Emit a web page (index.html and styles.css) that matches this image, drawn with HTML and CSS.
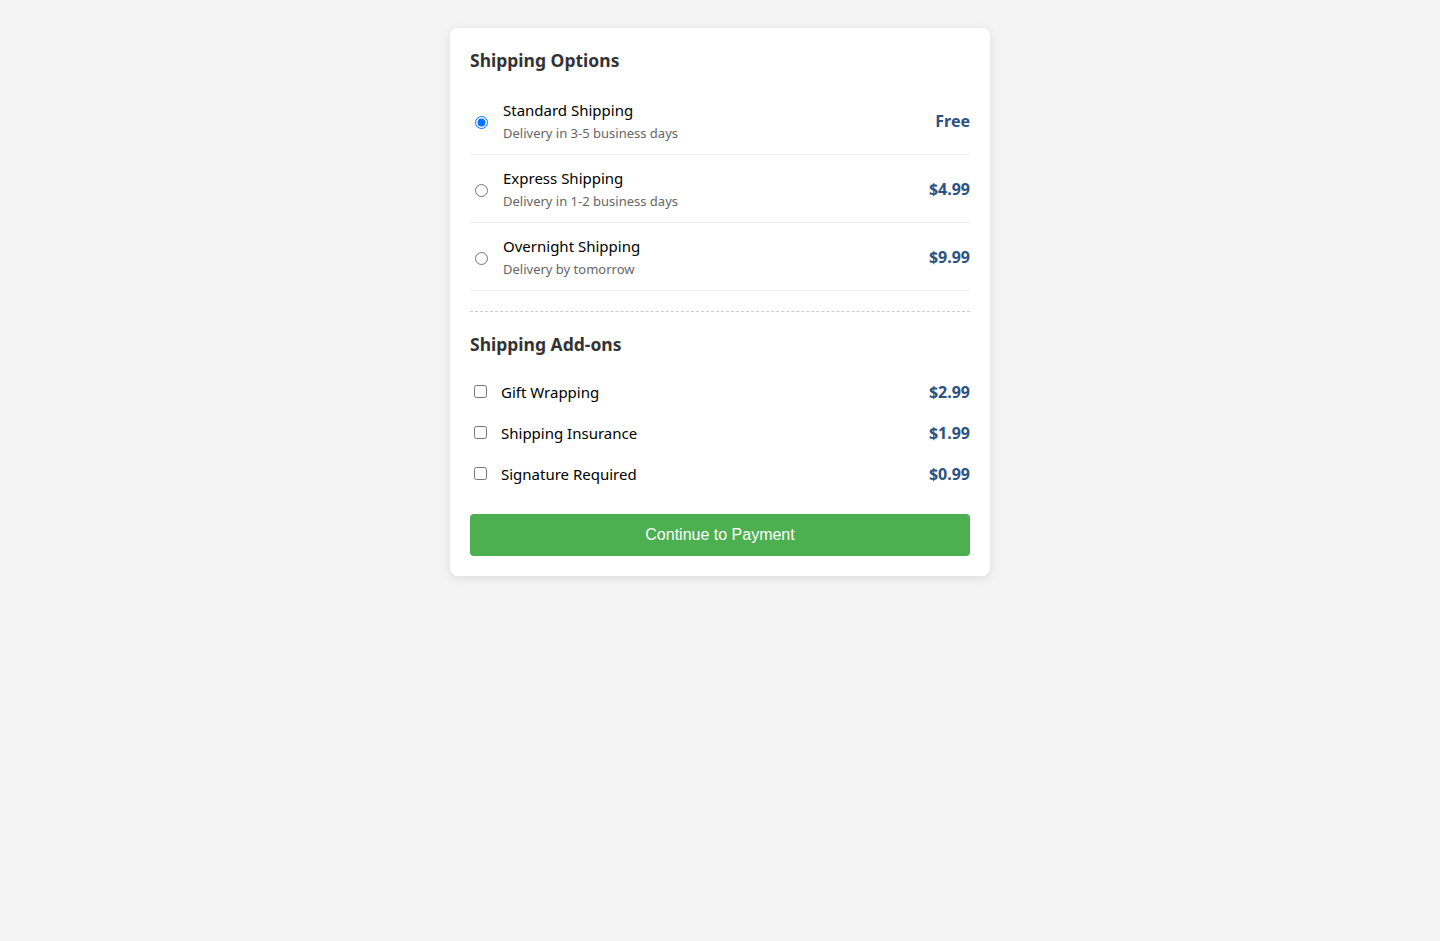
FILE: index.html
```html
<!DOCTYPE html>
<html lang="en">
<head>
<meta charset="utf-8">
<title>Shipping Options</title>
<link rel="stylesheet" href="styles.css">
</head>
<body>
<div class="card">
  <h2 class="section-title options-title">Shipping Options</h2>
  <div class="options">
    <label class="option">
      <input type="radio" name="ship" class="radio" checked>
      <span class="option-text">
        <span class="option-name">Standard Shipping</span>
        <span class="option-desc">Delivery in 3-5 business days</span>
      </span>
      <span class="price">Free</span>
    </label>
    <label class="option">
      <input type="radio" name="ship" class="radio">
      <span class="option-text">
        <span class="option-name">Express Shipping</span>
        <span class="option-desc">Delivery in 1-2 business days</span>
      </span>
      <span class="price">$4.99</span>
    </label>
    <label class="option">
      <input type="radio" name="ship" class="radio">
      <span class="option-text">
        <span class="option-name">Overnight Shipping</span>
        <span class="option-desc">Delivery by tomorrow</span>
      </span>
      <span class="price">$9.99</span>
    </label>
  </div>
  <div class="addons">
    <h2 class="section-title addons-title">Shipping Add-ons</h2>
    <label class="addon">
      <input type="checkbox" class="check">
      <span class="addon-name">Gift Wrapping</span>
      <span class="price">$2.99</span>
    </label>
    <label class="addon">
      <input type="checkbox" class="check">
      <span class="addon-name">Shipping Insurance</span>
      <span class="price">$1.99</span>
    </label>
    <label class="addon">
      <input type="checkbox" class="check">
      <span class="addon-name">Signature Required</span>
      <span class="price">$0.99</span>
    </label>
  </div>
  <button class="continue" type="button">Continue to Payment</button>
</div>
</body>
</html>
```
FILE: styles.css
```css
html, body {
  margin: 0;
  padding: 0;
}
body {
  background: #f4f4f4;
  font-family: "Noto Sans", "Open Sans", sans-serif;
  color: #000;
  padding-top: 28px;
  min-height: 913px;
}
.card {
  width: 500px;
  margin: 0 auto;
  padding: 20px;
  background: #fff;
  border-radius: 8px;
  box-shadow: 0 2px 10px rgba(0, 0, 0, 0.1);
}
.section-title {
  margin: 0;
  font-size: 17.5px;
  line-height: 24px;
  font-weight: 700;
  color: #333;
}
.options-title {
  margin-bottom: 15px;
}
.addons-title {
  margin-bottom: 15px;
}
.option {
  display: flex;
  align-items: center;
  padding: 12px 0 11px;
  border-bottom: 1px solid #eee;
  cursor: pointer;
}
.radio {
  margin: 3px 15px 0 5px;
  width: 13px;
  height: 13px;
  flex: none;
}
.option-text {
  display: flex;
  flex-direction: column;
  flex: 1;
}
.option-name {
  font-size: 15px;
  line-height: 22px;
}
.option-desc {
  margin-top: 2px;
  font-size: 13px;
  line-height: 20px;
  color: #666;
}
.price {
  font-size: 16px;
  font-weight: 700;
  color: #2c5282;
}
.addons {
  margin-top: 20px;
  padding-top: 20px;
  border-top: 1px dashed #ccc;
}
.addon {
  display: flex;
  align-items: center;
  height: 41px;
  cursor: pointer;
}
.check {
  margin: 0 14px 0 4px;
  width: 13px;
  height: 13px;
  flex: none;
}
.addon-name {
  flex: 1;
  font-size: 15px;
}
.continue {
  display: block;
  width: 100%;
  margin-top: 20px;
  height: 42px;
  border: none;
  border-radius: 4px;
  background: #4caf50;
  color: #fff;
  font-family: "Liberation Sans", Arial, sans-serif;
  font-size: 16px;
  cursor: pointer;
}
```
